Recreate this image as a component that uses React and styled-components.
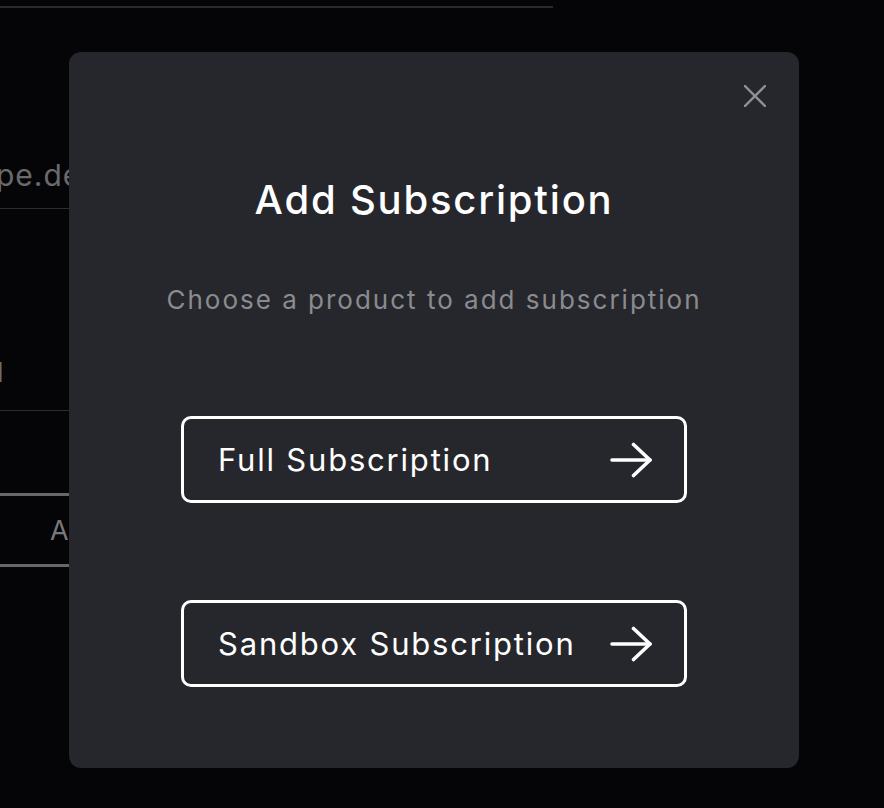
import React from 'react'
import styled, { createGlobalStyle } from 'styled-components'

const GlobalStyle = createGlobalStyle`
  html, body {
    margin: 0;
    padding: 0;
    background: #050507;
    font-family: Inter, "Liberation Sans", sans-serif;
  }
`

const ArrowIcon = () => (
  <svg width='44' height='36' viewBox='0 0 44 36' fill='none'>
    <path d='M3 18H41' stroke='#fff' strokeWidth='3.6' strokeLinecap='round' />
    <path d='M24.5 2.5L41 18L24.5 33.5' stroke='#fff' strokeWidth='3.6' strokeLinecap='round' strokeLinejoin='round' />
  </svg>
)

const CloseIcon = () => (
  <svg width='22' height='22' viewBox='0 0 22 22' fill='none'>
    <path d='M1 1L21 21M21 1L1 21' stroke='#909094' strokeWidth='2.4' strokeLinecap='square' />
  </svg>
)

export default () => {
  return (
    <>
      <GlobalStyle />
      <Page>
        <Sheet>
          <TopRule />
          <Field $top={149} $bottom={15}>
            <FieldText $size={30} $indent={-4}>pe.dev</FieldText>
          </Field>
          <Field $top={148} $bottom={21}>
            <FieldText $size={27} $indent={-3}>l</FieldText>
          </Field>
          <GhostButton>Add</GhostButton>
        </Sheet>
      </Page>
      <Overlay>
        <Modal>
          <Close aria-label='Close'>
            <CloseIcon />
          </Close>
          <Title>Add Subscription</Title>
          <Subtitle>Choose a product to add subscription</Subtitle>
          <Options>
            <Option>
              <span>Full Subscription</span>
              <ArrowIcon />
            </Option>
            <Option>
              <span>Sandbox Subscription</span>
              <ArrowIcon />
            </Option>
          </Options>
        </Modal>
      </Overlay>
    </>
  )
}

const Page = styled.div`
  min-height: 808px;
  overflow: hidden;
`

const Sheet = styled.div`
  width: 553px;
  padding-top: 6px;
  display: flex;
  flex-direction: column;
`

const TopRule = styled.div`
  height: 2px;
  background: #2a2a2d;
`

const Field = styled.div`
  padding-top: ${p => p.$top}px;
  padding-bottom: ${p => p.$bottom}px;
  border-bottom: 1px solid #2d2d30;
  overflow: hidden;
`

const FieldText = styled.div`
  font-size: ${p => p.$size}px;
  line-height: ${p => Math.round(p.$size * 1.2)}px;
  text-indent: ${p => p.$indent}px;
  letter-spacing: 1px;
  color: #6a6a6d;
  white-space: nowrap;
`

const GhostButton = styled.div`
  margin-top: 82px;
  height: 68px;
  border-top: 3px solid #67676a;
  border-bottom: 3px solid #67676a;
  display: flex;
  align-items: center;
  padding-left: 50px;
  font-size: 27px;
  color: #78787b;
`

const Overlay = styled.div`
  position: fixed;
  inset: 0;
  display: flex;
  align-items: flex-start;
  padding: 52px 0 0 69px;
`

const Modal = styled.div`
  position: relative;
  width: 730px;
  height: 716px;
  box-sizing: border-box;
  padding: 124px 0 81px;
  background: #26272c;
  border-radius: 12px;
  display: flex;
  flex-direction: column;
  align-items: center;
`

const Close = styled.button`
  position: absolute;
  top: 33px;
  right: 33px;
  width: 22px;
  height: 22px;
  padding: 0;
  border: 0;
  background: none;
  display: flex;
  cursor: pointer;
`

const Title = styled.h2`
  margin: 0;
  font-size: 40px;
  line-height: 48px;
  font-weight: 500;
  letter-spacing: 1.8px;
  color: #ffffff;
`

const Subtitle = styled.p`
  margin: 60px 0 0;
  font-size: 26px;
  line-height: 32px;
  letter-spacing: 2px;
  color: #8b8b8f;
`

const Options = styled.div`
  margin-top: 100px;
  display: flex;
  flex-direction: column;
  gap: 97px;
`

const Option = styled.button`
  width: 506px;
  height: 87px;
  box-sizing: border-box;
  border: 3px solid #ffffff;
  border-radius: 10px;
  background: transparent;
  padding: 0 31px 0 34px;
  display: flex;
  align-items: center;
  justify-content: space-between;
  font-family: Inter, "Liberation Sans", sans-serif;
  font-size: 31px;
  letter-spacing: 1.8px;
  color: #ffffff;
  cursor: pointer;
`
